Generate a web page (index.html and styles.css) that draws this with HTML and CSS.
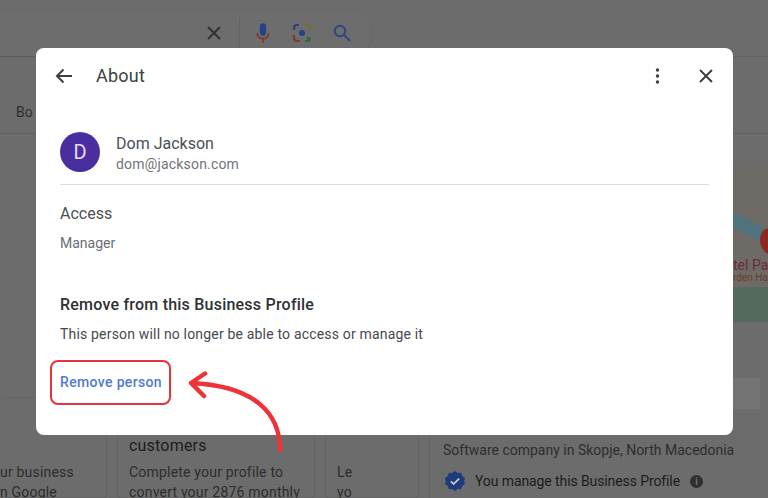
FILE: index.html
```html
<!DOCTYPE html>
<html lang="en">
<head>
<meta charset="utf-8">
<title>About</title>
<link rel="stylesheet" href="styles.css">
</head>
<body>
<div class="page">
  <header class="topbar">
    <div class="search">
      <svg class="ic-clear" viewBox="0 0 16 16"><path d="M2 2l12 12M14 2L2 14"/></svg>
      <span class="search-sep"></span>
      <svg class="ic-mic" viewBox="0 0 18 24"><path class="mic-body" d="M9 1a3.5 3.5 0 0 0-3.500 3.500v7a3.500 3.500 0 0 0 7 0v-7A3.500 3.500 0 0 0 9 1z"/><path class="mic-red" d="M2.500 12a6.500 6.500 0 0 0 6.500 6.500"/><path class="mic-gold" d="M15.500 12a6.500 6.500 0 0 1-6.500 6.500"/><path class="mic-red" d="M9 18.500V23"/></svg>
      <svg class="ic-lens" viewBox="0 0 20 20"><path class="l-b" d="M2 7V5a3 3 0 0 1 3-3h2"/><path class="l-y" d="M13 2h2a3 3 0 0 1 3 3v2"/><path class="l-r" d="M2 12v3a3 3 0 0 0 3 3h3"/><path class="l-g" d="M13 18h2a3 3 0 0 0 3-3"/><circle class="l-dot" cx="10" cy="10" r="3"/><circle class="l-dot2" cx="16" cy="15" r="1.500"/></svg>
      <svg class="ic-search" viewBox="0 0 18 18"><circle cx="7" cy="7" r="5.200"/><path d="M11 11l6 6"/></svg>
    </div>
  </header>
  <nav class="tabs"><span class="tab">Bo</span></nav>
  <main class="content">
    <div class="upper">
      <div class="map">
        <div class="map-road"></div>
        <div class="map-pin"></div>
        <span class="map-t1">tel Pa</span>
        <span class="map-t2">rden Ha</span>
        <div class="map-green"></div>
      </div>
    </div>
    <div class="button-row"><span class="ghost-btn"></span></div>
    <div class="cards">
      <section class="card card-a"><p>ur business<br>n Google</p></section>
      <section class="card card-b"><h3>customers</h3><p>Complete your profile to<br>convert your 2876 monthly</p></section>
      <section class="card card-c"><p>Le<br>yo</p></section>
      <section class="profile">
        <p class="profile-type">Software company in Skopje, North Macedonia</p>
        <div class="verified">
          <svg class="badge" viewBox="0 0 24 24"><path d="M12 1l3 2.300 3.700-.3 1.200 3.500 3.100 2.100-1.100 3.400 1.100 3.400-3.100 2.100-1.200 3.500-3.700-.3L12 23l-3-2.300-3.700.3-1.200-3.500L1 15.400 2.100 12 1 8.600l3.100-2.100L5.300 3l3.700.3z"/><path class="tick" d="M7.500 12.300l3 3 6-6"/></svg>
          <span>You manage this Business Profile</span>
          <span class="info">i</span>
        </div>
      </section>
    </div>
  </main>

  <div class="modal">
    <div class="modal-head">
      <svg class="ic-back" viewBox="0 0 18 16"><path d="M17 8H2M8.500 1.500L2 8l6.500 6.500"/></svg>
      <h2>About</h2>
      <svg class="ic-more" viewBox="0 0 4 16"><circle cx="2" cy="2" r="1.700"/><circle cx="2" cy="8" r="1.700"/><circle cx="2" cy="14" r="1.700"/></svg>
      <svg class="ic-close" viewBox="0 0 16 16"><path d="M2 2l12 12M14 2L2 14"/></svg>
    </div>
    <div class="person">
      <div class="avatar">D</div>
      <div class="person-text">
        <div class="person-name">Dom Jackson</div>
        <div class="person-mail">dom@jackson.com</div>
      </div>
    </div>
    <div class="access">
      <div class="access-title">Access</div>
      <div class="access-role">Manager</div>
    </div>
    <div class="remove">
      <h3>Remove from this Business Profile</h3>
      <p>This person will no longer be able to access or manage it</p>
      <a class="remove-link">Remove person</a>
    </div>
  </div>

  <svg class="arrow" viewBox="0 0 110 90"><path d="M94 86C94 50 70 22 5 19M19 9.500L5 19l13 13"/></svg>
</div>
</body>
</html>
```
FILE: styles.css
```css
* { box-sizing: border-box; }
html, body { margin: 0; padding: 0; }
body { font-family: Roboto, "Liberation Sans", sans-serif; background: #6c6c6c; }
.page { position: relative; width: 768px; height: 498px; overflow: hidden; background: #6c6c6c; display: flex; flex-direction: column; }

.topbar { height: 57px; border-bottom: 1px solid #626262; flex: none; display: flex; align-items: flex-start; padding-top: 10px; }
.search { width: 372px; height: 46px; border-radius: 0 23px 23px 0; background: #6d6d6d; box-shadow: 0 1px 2px rgba(0,0,0,.08); display: flex; align-items: center; padding-left: 206px; }
.ic-clear { width: 16px; height: 16px; fill: none; stroke: #333; stroke-width: 2; }
.search-sep { width: 1px; height: 30px; background: #636363; margin: 0 0 0 17px; }
.ic-mic { width: 16px; height: 22px; margin-left: 15px; fill: none; stroke-width: 2; }
.mic-body { fill: #24418a; stroke: none; }
.mic-red { stroke: #7f3a30; }
.mic-gold { stroke: #7f3a30; }
.ic-lens { width: 20px; height: 20px; margin-left: 21px; fill: none; stroke-width: 2.200; }
.l-b { stroke: #2a4178; } .l-y { stroke: #7c6a33; } .l-r { stroke: #7f3a30; } .l-g { stroke: #2f6644; }
.l-dot { fill: #24418a; } .l-dot2 { fill: #2f6644; }
.ic-search { width: 18px; height: 18px; margin-left: 21px; fill: none; stroke: #30487f; stroke-width: 2; }

.tabs { height: 77px; border-bottom: 1px solid #626262; flex: none; padding: 47px 0 0 16px; }
.tab { font-size: 14px; line-height: 16px; color: #2f2f2f; display: block; }

.content { flex: 1; min-height: 0; display: flex; flex-direction: column; }
.upper { height: 188px; flex: none; display: flex; justify-content: flex-end; padding-top: 29px; }
.map { position: relative; width: 35px; height: 159px; background: #6e6b66; overflow: hidden; }
.map-road { position: absolute; left: -6px; top: 62px; width: 60px; height: 14px; background: #50727e; transform: rotate(28deg); }
.map-pin { position: absolute; left: 27px; top: 65px; width: 20px; height: 26px; border-radius: 50% 50% 50% 50% / 40% 40% 60% 60%; background: #8c2a22; }
.map-t1 { position: absolute; left: 0; top: 95px; font-size: 14px; line-height: 14px; color: #6d2b38; white-space: nowrap; }
.map-t2 { position: absolute; left: 0; top: 109px; font-size: 10px; line-height: 12px; color: #6d3a30; white-space: nowrap; }
.map-green { position: absolute; left: 0; top: 124px; width: 100%; height: 35px; background: #56695d; }

.button-row { height: 90px; flex: none; display: flex; justify-content: flex-end; padding: 56px 8px 0 0; }
.ghost-btn { width: 27px; height: 31px; background: #747474; }

.cards { flex: 1; min-height: 0; display: flex; gap: 10px; margin-top: -15px; }
.card { border: 1px solid #646464; border-radius: 8px 8px 0 0; font-size: 14px; line-height: 20px; letter-spacing: .2px; color: #2d2d2d; white-space: nowrap; }
.card p { margin: 0; }
.card-a { width: 107px; padding: 64px 0 0 0; border-left: 0; }
.card-b { width: 198px; padding: 38px 0 0 11px; }
.card-b h3 { margin: 0 0 6px; font-size: 16px; font-weight: 400; line-height: 20px; color: #1c1c1c; }
.card-c { width: 94px; padding: 64px 0 0 11px; }
.profile { padding: 43px 0 0 13px; border-left: 1px solid #646464; flex: 1; min-width: 0; }
.profile-type { margin: 0 0 10px; font-size: 14px; line-height: 20px; color: #2d2d2d; white-space: nowrap; }
.verified { display: flex; align-items: center; font-size: 14px; line-height: 22px; letter-spacing: -.1px; color: #1c1c1c; white-space: nowrap; }
.badge { width: 22px; height: 22px; fill: #1d3b7d; margin: 0 9px 0 1px; flex: none; }
.tick { fill: none; stroke: #c9c9c9; stroke-width: 2; }
.info { width: 13px; height: 13px; border-radius: 50%; background: #2f2f2f; color: #6c6c6c; font-size: 10px; line-height: 13px; letter-spacing: 0; text-align: center; margin-left: 10px; font-weight: 700; }

.modal { position: absolute; left: 36px; top: 48px; width: 697px; height: 387px; background: #fff; border-radius: 8px; padding: 0 24px; color: #3c4043; }
.modal-head { height: 55px; display: flex; align-items: center; margin-left: -5px; }
.ic-back { width: 18px; height: 16px; fill: none; stroke: #3c4043; stroke-width: 2; margin-top: 1px; }
.modal-head h2 { margin: 0 0 0 23px; font-size: 18px; font-weight: 400; letter-spacing: .25px; line-height: 24px; color: #3c4043; flex: 1; }
.ic-more { width: 5px; height: 16px; fill: #3c4043; margin-right: 38px; margin-top: 1px; }
.ic-close { width: 16px; height: 16px; fill: none; stroke: #3c4043; stroke-width: 2; margin-right: -5px; margin-top: 1px; }

.person { margin-top: 29px; height: 53px; border-bottom: 1px solid #dadce0; display: flex; gap: 16px; align-items: flex-start; }
.avatar { width: 40px; height: 40px; border-radius: 50%; background: #4a2ea0; color: #e6def7; font-size: 20px; line-height: 40px; text-align: center; }
.person-name { font-size: 16px; line-height: 22px; color: #4b4f54; padding-top: 1px; }
.person-mail { font-size: 14px; line-height: 18px; letter-spacing: .18px; color: #6f7378; }

.access { padding-top: 18px; }
.access-title { font-size: 16px; line-height: 22px; color: #4b4f54; }
.access-role { font-size: 14px; line-height: 18px; margin-top: 9px; color: #6a6e73; }

.remove { margin-top: 42px; }
.remove h3 { margin: 0; font-size: 16px; font-weight: 500; letter-spacing: .22px; line-height: 22px; color: #2f3134; }
.remove p { margin: 8px 0 0; font-size: 14px; line-height: 20px; letter-spacing: .18px; color: #45494e; }
.remove-link { display: flex; align-items: center; width: 121px; height: 45px; margin: 16px 0 0 -10px; padding: 0 0 2px 8px; border: 2.500px solid #e6333d; border-radius: 8px; font-size: 14px; font-weight: 500; letter-spacing: .35px; color: #4f7bd2; white-space: nowrap; }

.arrow { position: absolute; left: 186px; top: 364px; width: 110px; height: 90px; fill: none; stroke: #ee3338; stroke-width: 4.500; stroke-linecap: round; stroke-linejoin: round; overflow: visible; }
```
